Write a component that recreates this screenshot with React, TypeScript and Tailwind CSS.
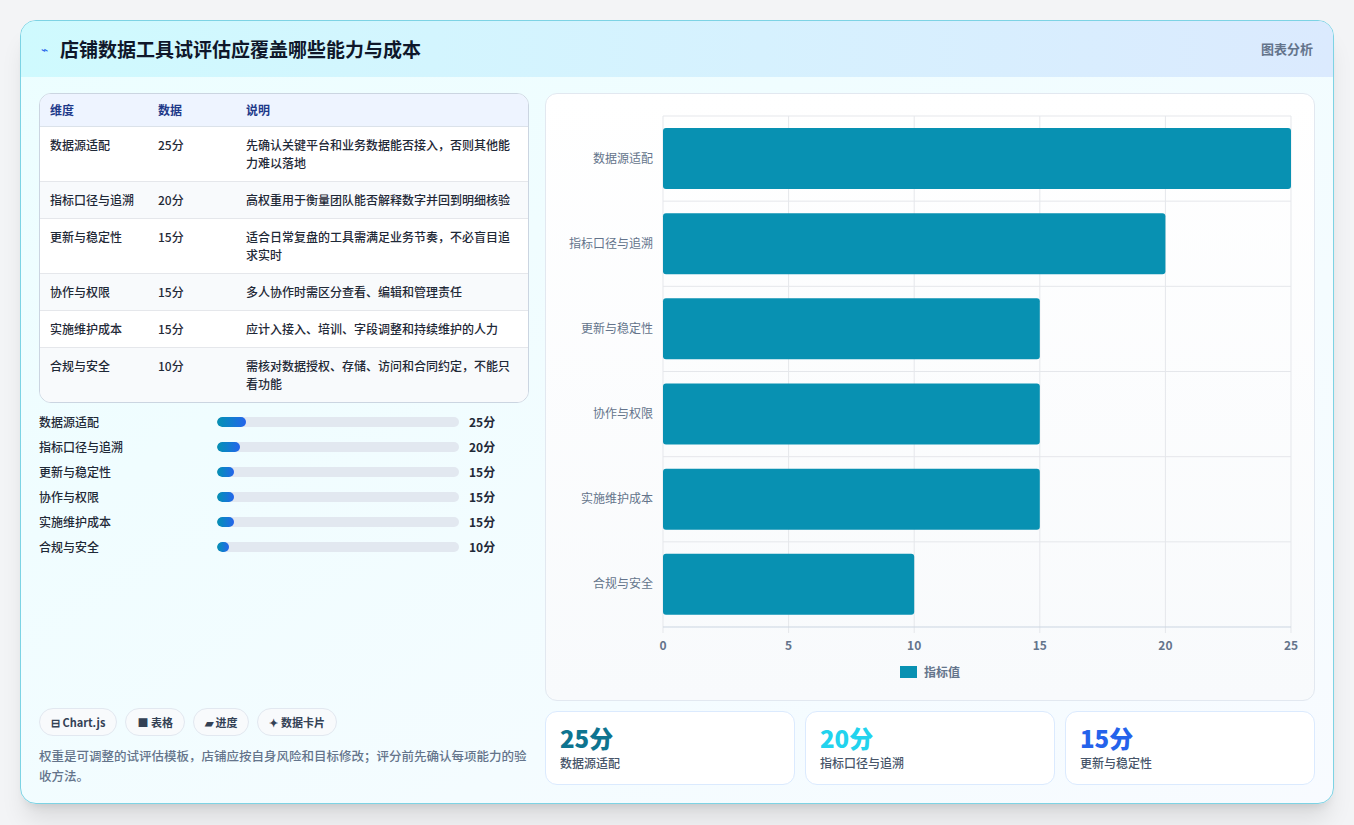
import React from "react";

const rows = [
  { k: "数据源适配", v: 25, d: "先确认关键平台和业务数据能否接入，否则其他能力难以落地" },
  { k: "指标口径与追溯", v: 20, d: "高权重用于衡量团队能否解释数字并回到明细核验" },
  { k: "更新与稳定性", v: 15, d: "适合日常复盘的工具需满足业务节奏，不必盲目追求实时" },
  { k: "协作与权限", v: 15, d: "多人协作时需区分查看、编辑和管理责任" },
  { k: "实施维护成本", v: 15, d: "应计入接入、培训、字段调整和持续维护的人力" },
  { k: "合规与安全", v: 10, d: "需核对数据授权、存储、访问和合同约定，不能只看功能" },
];

const font = { fontFamily: '"Noto Sans CJK SC", "Noto Sans", sans-serif' };

function Chart() {
  const x0 = 117, x1 = 745, y0 = 22, y1 = 533;
  const sx = (v: number) => x0 + ((x1 - x0) * v) / 25;
  const rh = (y1 - y0) / 6;
  return (
    <svg width="768" height="608" viewBox="0 0 768 608" style={font}>
      {[0, 5, 10, 15, 20, 25].map((t) => (
        <g key={t}>
          <line x1={sx(t)} x2={sx(t)} y1={y0} y2={y1 + 6} stroke="#e5e7eb" />
          <text x={sx(t)} y={556} textAnchor="middle" fontSize="12" fill="#64748b" fontWeight="600">{t}</text>
        </g>
      ))}
      {[0, 1, 2, 3, 4, 5, 6].map((i) => (
        <line key={i} x1={x0} x2={x1} y1={y0 + i * rh} y2={y0 + i * rh} stroke={i === 6 ? "#cbd5e1" : "#e5e7eb"} />
      ))}
      {rows.map((r, i) => (
        <g key={r.k}>
          <rect x={x0} y={y0 + i * rh + 12} width={sx(r.v) - x0} height={61} rx={3} fill="#0891b2" />
          <text x={107} y={y0 + i * rh + rh / 2 + 4} textAnchor="end" fontSize="12" fill="#64748b">{r.k}</text>
        </g>
      ))}
      <rect x={354} y={572} width={17} height={12} fill="#0891b2" />
      <text x={378} y={583} fontSize="12" fill="#64748b" fontWeight="600">指标值</text>
    </svg>
  );
}

export default function App() {
  return (
    <div className="w-[1354px] h-[825px] bg-[#f3f4f6] pt-5 pl-5" style={font}>
      <div className="w-[1314px] h-[784px] rounded-2xl border border-[#7dd3e4] bg-gradient-to-br from-[#ecfeff] to-[#f8fbff] shadow-xl overflow-hidden flex flex-col">
        <div className="h-[56px] shrink-0 flex items-center justify-between px-5 bg-gradient-to-r from-[#cffafe] to-[#dbeafe]">
          <div className="flex items-center gap-3">
            <span className="text-[#2563eb] text-xs">⌁</span>
            <span className="text-[19px] font-bold text-[#0f172a]">店铺数据工具试评估应覆盖哪些能力与成本</span>
          </div>
          <span className="text-[13px] font-semibold text-[#64748b]">图表分析</span>
        </div>
        <div className="flex-1 flex gap-4 px-[18px] pt-4 pb-[17px]">
          <div className="w-[491px] flex flex-col">
            <div className="rounded-xl border border-[#cbd5e1] bg-white overflow-hidden text-[12px]">
              <div className="flex bg-[#eef4ff] text-[#1e3a8a] font-semibold h-[33px] items-center border-b border-[#dbe2ea]">
                <div className="w-[118px] pl-[10px]">维度</div>
                <div className="w-[88px]">数据</div>
                <div className="flex-1">说明</div>
              </div>
              {rows.map((r, i) => (
                <div key={r.k} className={`flex py-[9px] leading-[18px] text-[#1f2937] border-b border-[#e5e7eb] last:border-b-0 ${i % 2 ? "bg-[#f8fafc]" : "bg-white"}`}>
                  <div className="w-[118px] pl-[10px] font-medium">{r.k}</div>
                  <div className="w-[88px] font-medium">{r.v}分</div>
                  <div className="flex-1 pr-[10px] font-medium">{r.d}</div>
                </div>
              ))}
            </div>
            <div className="mt-[10px] flex flex-col gap-[7px]">
              {rows.map((r) => (
                <div key={r.k} className="flex items-center h-[18px] text-[12px] font-medium text-[#1f2937]">
                  <div className="w-[178px]">{r.k}</div>
                  <div className="w-[242px] h-[10px] rounded-full bg-[#e2e8f0] overflow-hidden">
                    <div className="h-full rounded-full bg-gradient-to-r from-[#0891b2] to-[#2563eb]" style={{ width: `${r.v * 1.15}px` }} />
                  </div>
                  <div className="ml-[10px] font-bold">{r.v}分</div>
                </div>
              ))}
            </div>
            <div className="flex-1" />
            <div className="flex gap-2 text-[11px] font-semibold text-[#334155]">
              {["⊟ Chart.js", "■ 表格", "▰ 进度", "✦ 数据卡片"].map((t) => (
                <span key={t} className="rounded-full border border-[#e2e8f0] bg-[#f8fafc] px-[11px] h-[28px] flex items-center">{t}</span>
              ))}
            </div>
            <p className="mt-[10px] text-[12.5px] leading-[20px] font-medium text-[#64748b]">权重是可调整的试评估模板，店铺应按自身风险和目标修改；评分前先确认每项能力的验收方法。</p>
          </div>
          <div className="flex-1 flex flex-col gap-[10px]">
            <div className="h-[608px] rounded-xl border border-[#e2e8f0] bg-gradient-to-b from-white to-[#f8fafc] overflow-hidden">
              <Chart />
            </div>
            <div className="flex gap-[10px]">
              {[
                { v: "25分", k: "数据源适配", c: "text-[#0e7490]" },
                { v: "20分", k: "指标口径与追溯", c: "text-[#22d3ee]" },
                { v: "15分", k: "更新与稳定性", c: "text-[#2563eb]" },
              ].map((s) => (
                <div key={s.k} className="flex-1 h-[74px] rounded-xl border border-[#dbeafe] bg-white px-[14px] pt-[10px]">
                  <div className={`text-[24px] font-extrabold leading-[32px] ${s.c}`}>{s.v}</div>
                  <div className="text-[12px] text-[#475569] font-medium">{s.k}</div>
                </div>
              ))}
            </div>
          </div>
        </div>
      </div>
    </div>
  );
}
